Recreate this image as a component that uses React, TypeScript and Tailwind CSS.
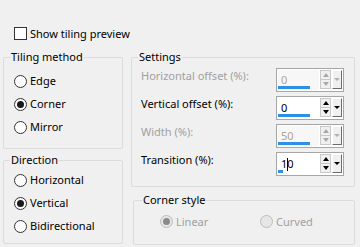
import React from 'react';

type Opt = { label: string; checked?: boolean };

function Radio({ checked, disabled }: { checked?: boolean; disabled?: boolean }) {
  return (
    <span
      className={
        'flex h-[13px] w-[13px] shrink-0 items-center justify-center rounded-full border ' +
        (disabled ? 'border-[#bcbcbc] bg-[#e6e6e6]' : 'border-[#333333] bg-white')
      }
    >
      {checked && (
        <span className={'h-[7px] w-[7px] rounded-full ' + (disabled ? 'bg-[#8a8a8a]' : 'bg-[#1a1a1a]')} />
      )}
    </span>
  );
}

function RadioGroup({ title, options, className, padTop }: { title: string; options: Opt[]; className: string; padTop: string }) {
  return (
    <fieldset className={'rounded-[2px] border border-[#dcdcdc] pl-[6px] ' + className}>
      <legend className="px-px leading-[16px]">{title}</legend>
      <div className={'flex flex-col pl-[4px] ' + padTop}>
        {options.map((o) => (
          <div key={o.label} className="flex h-[23px] items-center gap-[3px]">
            <Radio checked={o.checked} />
            <span>{o.label}</span>
          </div>
        ))}
      </div>
    </fieldset>
  );
}

function Spin({ value, bar, disabled, caret }: { value: string; bar: number; disabled?: boolean; caret?: boolean }) {
  return (
    <div className="flex h-[24px] w-[68px] border border-[#a6a6a6] bg-white p-px">
      <div className={'relative flex-1 ' + (disabled ? 'bg-[#f7f7f7]' : 'bg-white')}>
        <span
          className={'absolute left-[3px] top-[2px] flex items-center leading-[16px] ' + (disabled ? 'text-[#b3a491]' : 'text-black')}
        >
          {caret ? (
            <>
              {value.slice(0, 1)}
              <span className="-mr-px h-[13px] w-px bg-black" />
              {value.slice(1)}
            </>
          ) : (
            value
          )}
        </span>
        <div className="absolute bottom-[1px] left-0 h-[3px] bg-[#2e8fe6]" style={{ width: bar }} />
      </div>
      <div className="ml-px flex h-[19px] w-[11px] flex-col border border-[#c8c8c8] bg-[#f0f0f0]">
        <div className="flex flex-1 items-center justify-center border-b border-[#c8c8c8]">
          <span className={'h-0 w-0 border-x-[3px] border-b-[4px] border-x-transparent ' + (disabled ? 'border-b-[#a8a8a8]' : 'border-b-black')} />
        </div>
        <div className="flex flex-1 items-center justify-center">
          <span className={'h-0 w-0 border-x-[3px] border-t-[4px] border-x-transparent ' + (disabled ? 'border-t-[#a8a8a8]' : 'border-t-black')} />
        </div>
      </div>
      <div className="ml-px flex h-[19px] w-[10px] items-center justify-center border border-b-[#6d6d6d] border-l-white border-r-[#6d6d6d] border-t-white bg-[#f0f0f0]">
        <span className={'h-0 w-0 border-x-[3px] border-t-[3px] border-x-transparent ' + (disabled ? 'border-t-[#b0b0b0]' : 'border-t-black')} />
      </div>
    </div>
  );
}

export default function App() {
  const rows = [
    { label: 'Horizontal offset (%):', value: '0', bar: 32, disabled: true, mt: 'mt-[3px]' },
    { label: 'Vertical offset (%):', value: '0', bar: 32, disabled: false, mt: 'mt-[4px]' },
    { label: 'Width (%):', value: '50', bar: 32, disabled: true, mt: 'mt-[4px]' },
    { label: 'Transition (%):', value: '10', bar: 5, disabled: false, mt: 'mt-[4px]', caret: true },
  ];

  return (
    <div
      className="h-[247px] w-[360px] overflow-hidden bg-[#f0f0f0] text-[11px] text-black"
      style={{ fontFamily: '"Noto Sans", "Liberation Sans", sans-serif' }}
    >
      <div className="flex items-center gap-[3px] pl-[14px] pt-[27px]">
        <span className="h-[13px] w-[13px] border border-[#333333] bg-white" />
        <span className="leading-[13px]">Show tiling preview</span>
      </div>

      <div className="mt-[9px] flex">
        <div className="ml-[3px] flex w-[120px] flex-col gap-[3px]">
          <RadioGroup
            title="Tiling method"
            className="h-[100px]"
            padTop="pt-[5px]"
            options={[{ label: 'Edge' }, { label: 'Corner', checked: true }, { label: 'Mirror' }]}
          />
          <RadioGroup
            title="Direction"
            className="h-[92px]"
            padTop="pt-[1px]"
            options={[{ label: 'Horizontal' }, { label: 'Vertical', checked: true }, { label: 'Bidirectional' }]}
          />
        </div>

        <div className="ml-[8px] flex w-[224px] flex-col">
          <fieldset className="h-[138px] rounded-[2px] border border-[#dcdcdc] pl-[6px] pr-[10px]">
            <legend className="px-px leading-[16px]">Settings</legend>
            <div className="flex flex-col pl-[3px]">
              {rows.map((r) => (
                <div key={r.label} className={'flex items-start justify-between ' + r.mt}>
                  <span className={'leading-[16px] ' + (r.disabled ? 'text-[#a0a0a0]' : 'text-black')}>{r.label}</span>
                  <Spin value={r.value} bar={r.bar} disabled={r.disabled} caret={r.caret} />
                </div>
              ))}
            </div>
          </fieldset>

          <fieldset className="ml-[2px] mt-[5px] h-[53px] rounded-[2px] border border-[#dcdcdc] pl-[8px]">
            <legend className="px-px leading-[16px]">Corner style</legend>
            <div className="flex pl-[18px] pt-[7px] text-[#a0a0a0]">
              <div className="flex w-[100px] items-center gap-[3px]">
                <Radio checked disabled />
                <span className="leading-[13px]">Linear</span>
              </div>
              <div className="flex items-center gap-[3px]">
                <Radio disabled />
                <span className="leading-[13px]">Curved</span>
              </div>
            </div>
          </fieldset>
        </div>
      </div>
    </div>
  );
}
